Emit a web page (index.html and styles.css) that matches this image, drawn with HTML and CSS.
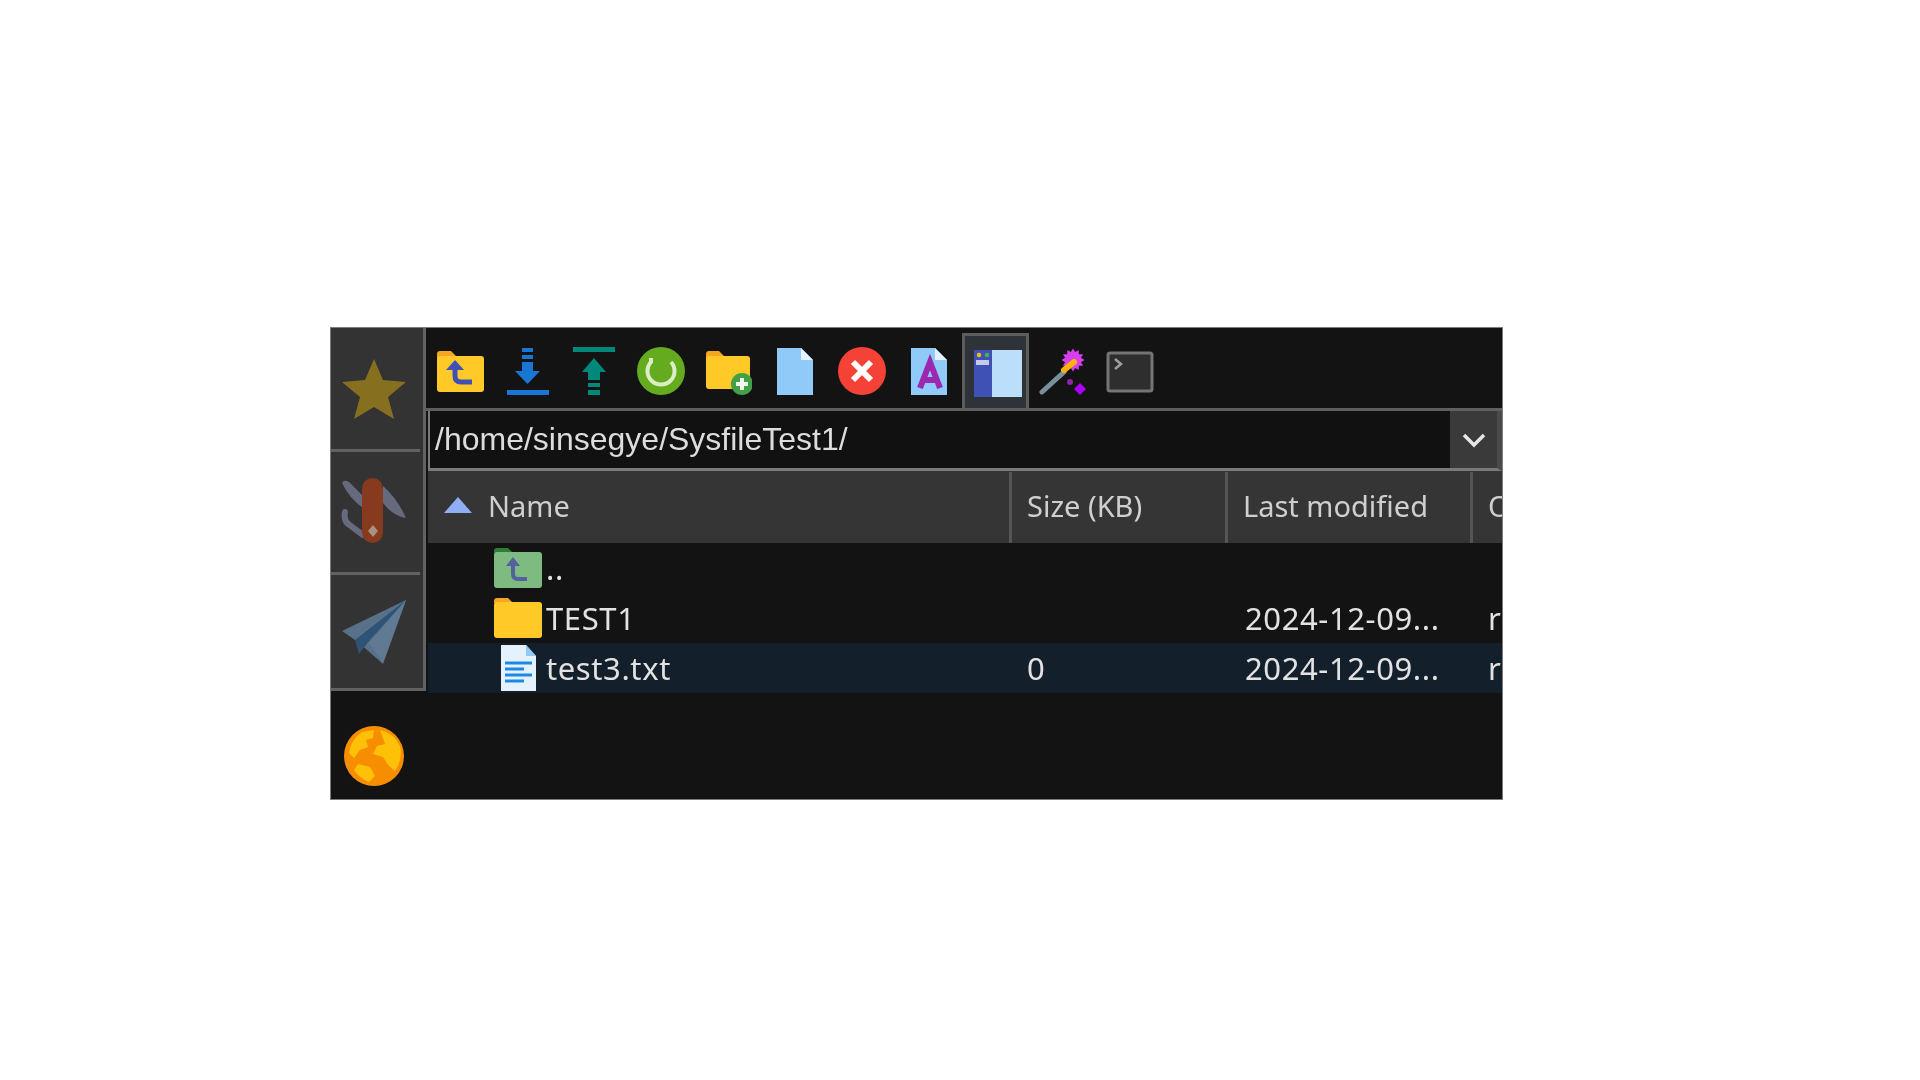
FILE: index.html
```
<!DOCTYPE html>
<html lang="en">
<head>
<meta charset="utf-8">
<title>File browser</title>
<link rel="stylesheet" href="styles.css">
</head>
<body>
<div class="window">
  <aside class="rail">
    <div class="rail-tabs">
      <div class="rail-tab tab-a">
        <svg width="66" height="62" viewBox="0 0 66 62"><polygon fill="#86701f" points="33,1 42,22 65,24 47,39 53,61 33,49 13,61 19,39 1,24 24,22"/></svg>
      </div>
      <div class="rail-tab tab-b">
        <svg width="66" height="68" viewBox="0 0 66 68">
          <path fill="#666a7e" d="M1 5 Q3 1 8 4 L22 18 L22 30 Q8 20 1 5 Z"/>
          <path fill="#666a7e" d="M42 8 Q56 20 65 40 Q52 38 42 25 Z"/>
          <path fill="none" stroke="#666a7e" stroke-width="6" stroke-linecap="round" d="M4 34 Q2 44 10 48 L22 57"/>
          <rect x="21" y="0" width="21" height="65" rx="10.5" fill="#873a1d"/>
          <polygon fill="#a98f84" points="32,47 37,53 32,59 27,53"/>
        </svg>
      </div>
      <div class="rail-tab tab-c">
        <svg width="66" height="66" viewBox="0 0 66 66">
          <polygon fill="#587189" points="65,1 1,32 17,43 42,65"/>
          <polygon fill="#2f5376" points="65,1 14,41 18,55 28,42"/>
          <polygon fill="#5f7a92" points="65,1 28,44 42,64"/>
        </svg>
      </div>
    </div>
    <div class="rail-foot">
      <svg width="60" height="60" viewBox="0 0 60 60">
        <circle cx="30" cy="30" r="30" fill="#f78d00"/>
        <path fill="#ffc107" d="M18 6 L30 4 L29 12 L22 14 L24 21 L16 24 L10 32 L5 27 Q7 13 18 6 Z"/>
        <path fill="#ffc107" d="M36 4 Q50 7 56 20 Q59 33 51 45 L44 39 L39 31 L29 28 L33 20 L41 18 Z"/>
        <path fill="#ffc107" d="M14 38 L26 41 L31 50 L25 56 Q15 52 10 44 Z"/>
      </svg>
    </div>
  </aside>
  <main class="main">
    <div class="toolbar">
      <button class="tool">
        <svg width="48" height="48" viewBox="0 0 48 48"><path fill="#f5a623" d="M1 7 Q1 4 4 4 H15 L20 9 V20 H1 Z"/><rect x="1" y="9" width="47" height="36" rx="3" fill="#ffca28"/><path fill="none" stroke="#3f51b5" stroke-width="5" d="M19 20 V29 Q19 35 25 35 H36"/><polygon fill="#3f51b5" points="19,13 28,23 10,23"/></svg>
      </button>
      <button class="tool">
        <svg width="48" height="48" viewBox="0 0 48 48"><g fill="#1976d2"><rect x="19" y="1" width="11" height="4"/><rect x="19" y="8" width="11" height="4"/><rect x="19" y="15" width="11" height="9"/><polygon points="12,24 37,24 24.5,37"/><rect x="4" y="43" width="42" height="5"/></g></svg>
      </button>
      <button class="tool">
        <svg width="48" height="48" viewBox="0 0 48 48"><g fill="#00897b"><rect x="3" y="0" width="42" height="5"/><polygon points="24,11 36,25 12,25"/><rect x="18" y="25" width="12" height="8"/><rect x="18" y="36" width="12" height="4"/><rect x="18" y="43" width="12" height="5"/></g></svg>
      </button>
      <button class="tool">
        <svg width="48" height="48" viewBox="0 0 48 48"><circle cx="24" cy="24" r="24" fill="#64ac1e"/><path fill="none" stroke="#dcedc8" stroke-width="4" d="M34 15 A13.5 13.5 0 1 1 14 15 V11"/></svg>
      </button>
      <button class="tool">
        <svg width="48" height="48" viewBox="0 0 48 48"><path fill="#f5a623" d="M2 7 Q2 4 5 4 H15 L20 9 V20 H2 Z"/><rect x="2" y="9" width="44" height="33" rx="3" fill="#ffca28"/><circle cx="38" cy="37" r="11" fill="#43a047"/><path fill="none" stroke="#f1f8e9" stroke-width="4" d="M38 31 V43 M32 37 H44"/></svg>
      </button>
      <button class="tool">
        <svg width="48" height="48" viewBox="0 0 48 48"><polygon fill="#90caf9" points="6,1 30,1 42,13 42,48 6,48"/><polygon fill="#e3f2fd" points="30,1 42,13 30,13"/></svg>
      </button>
      <button class="tool">
        <svg width="48" height="48" viewBox="0 0 48 48"><circle cx="24" cy="24" r="24" fill="#f44336"/><path fill="none" stroke="#fff" stroke-width="6" d="M15 15 L33 33 M33 15 L15 33"/></svg>
      </button>
      <button class="tool">
        <svg width="48" height="48" viewBox="0 0 48 48"><polygon fill="#90caf9" points="6,1 30,1 42,13 42,48 6,48"/><polygon fill="#e3f2fd" points="30,1 42,13 30,13"/><path fill="none" stroke="#9c27b0" stroke-width="6" d="M15 41 L25 15 L35 41 M18 33 H32"/></svg>
      </button>
      <button class="tool is-active">
        <svg width="48" height="48" viewBox="0 0 48 48"><rect x="0" y="1" width="18" height="47" fill="#3f51b5"/><rect x="18" y="1" width="30" height="47" fill="#bbdefb"/><circle cx="5" cy="6" r="2.2" fill="#ffc107"/><circle cx="13" cy="6" r="2.2" fill="#4caf50"/><rect x="2" y="11" width="13" height="5" fill="#c5cae9"/></svg>
      </button>
      <button class="tool">
        <svg width="48" height="48" viewBox="0 0 48 48"><g transform="translate(34 13) scale(.72) translate(-34 -17)"><polygon fill="#d83df0" points="34,1 37,6 42,3 42,9 48,9 45,14 50,17 45,20 48,25 42,25 42,31 37,28 34,33 31,28 26,31 26,25 20,25 23,20 18,17 23,14 20,9 26,9 26,3 31,6"/></g><path stroke="#78909c" stroke-width="5" stroke-linecap="round" fill="none" d="M3 45 L25 25"/><path stroke="#ffb300" stroke-width="6" stroke-linecap="round" fill="none" d="M25 23 L35 15"/><polygon fill="#aa00ff" points="41,36 47,42 41,48 35,42"/><circle cx="31" cy="35" r="3" fill="#8e24aa"/></svg>
      </button>
      <button class="tool">
        <svg width="48" height="48" viewBox="0 0 48 48"><rect x="2" y="6" width="44" height="38" rx="2" fill="#2e2e2e" stroke="#757575" stroke-width="3"/><path fill="none" stroke="#9e9e9e" stroke-width="2.5" d="M9 12 L15 17 L9 22"/></svg>
      </button>
    </div>
    <div class="address">
      <span class="path">/home/sinsegye/SysfileTest1/</span>
      <span class="drop">
        <svg width="24" height="16" viewBox="0 0 24 16"><path fill="none" stroke="#e6e6e6" stroke-width="3.5" d="M2 3 L12 13 L22 3"/></svg>
      </span>
    </div>
    <div class="table">
      <div class="head">
        <div class="col col-name">
          <svg class="sort" width="30" height="16" viewBox="0 0 30 16"><polygon fill="#90aef5" points="15,0 29,16 1,16"/></svg>
          <span>Name</span>
        </div>
        <div class="col col-size"><span>Size (KB)</span></div>
        <div class="col col-date"><span>Last modified</span></div>
        <div class="col col-owner"><span>Owner</span></div>
      </div>
      <div class="row">
        <div class="cell col-name">
          <svg class="file-ico" width="48" height="42" viewBox="0 0 48 42"><path fill="#2e7d32" d="M0 4 Q0 1 3 1 H14 L19 6 H0 Z"/><rect x="0" y="5" width="48" height="36" rx="3" fill="#7dbb80"/><path fill="none" stroke="#56609c" stroke-width="4" d="M19 17 V27 Q19 32 24 32 H33"/><polygon fill="#56609c" points="19,10 26,19 12,19"/></svg>
          <span>..</span>
        </div>
        <div class="cell col-size"></div><div class="cell col-date"></div><div class="cell col-owner"></div>
      </div>
      <div class="row">
        <div class="cell col-name">
          <svg class="file-ico" width="48" height="42" viewBox="0 0 48 42"><path fill="#f5a623" d="M0 4 Q0 1 3 1 H14 L19 6 H0 Z"/><rect x="0" y="5" width="48" height="36" rx="3" fill="#ffca28"/></svg>
          <span>TEST1</span>
        </div>
        <div class="cell col-size"></div>
        <div class="cell col-date"><span>2024-12-09...</span></div>
        <div class="cell col-owner"><span>root</span></div>
      </div>
      <div class="row is-current">
        <div class="cell col-name">
          <svg class="file-ico" width="48" height="46" viewBox="0 0 48 46"><polygon fill="#e3f2fd" points="7,0 32,0 42,11 42,46 7,46"/><polygon fill="#90caf9" points="32,0 42,11 32,11"/><path stroke="#1e88e5" stroke-width="3" d="M11 18 H38 M11 24 H30 M11 30 H38 M11 36 H30"/></svg>
          <span>test3.txt</span>
        </div>
        <div class="cell col-size"><span>0</span></div>
        <div class="cell col-date"><span>2024-12-09...</span></div>
        <div class="cell col-owner"><span>root</span></div>
      </div>
    </div>
  </main>
</div>
</body>
</html>
```
FILE: styles.css
```
* { box-sizing: border-box; }
html, body { margin: 0; padding: 0; background: #fff; }
body { padding: 327px 0 0 330px; font-family: "Noto Sans", "Open Sans", sans-serif; }

.window {
  display: flex;
  width: 1173px;
  height: 473px;
  background: #131313;
  border: 1px solid #7c7c7c;
  overflow: hidden;
  filter: blur(0.6px);
}

.rail { flex: none; width: 95px; display: flex; flex-direction: column; }
.rail-tabs {
  width: 95px;
  height: 363px;
  background: #333;
  border-right: 3px solid #626262;
  border-bottom: 3px solid #626262;
  display: flex;
  flex-direction: column;
}
.rail-tab { display: flex; align-items: center; justify-content: center; padding-right: 4px; }
.tab-a { height: 124px; border-bottom: 3px solid #626262; margin-right: 3px; }
.tab-b { height: 123px; border-bottom: 3px solid #626262; margin-right: 3px; }
.tab-c { flex: 1; margin-right: 3px; }
.rail-foot { flex: 1; display: flex; align-items: center; justify-content: center; padding: 22px 9px 0 0; }

.main { flex: 1; min-width: 0; display: flex; flex-direction: column; }

.toolbar { flex: none; height: 83px; display: flex; align-items: stretch; border-bottom: 3px solid #5f5f5f; }
.tool {
  flex: none;
  width: 67px;
  padding: 6px 0 0;
  border: 0;
  background: none;
  display: flex;
  align-items: center;
  justify-content: center;
}
.is-active {
  margin-top: 5px;
  padding: 2px 0 0 5px;
  background: #2d3339;
  border: 3px solid #5c5c5c;
  border-bottom: 0;
}

.address {
  flex: none;
  height: 60px;
  margin-left: 2px;
  display: flex;
  align-items: stretch;
  background: #111;
  border-left: 2px solid #7a7a7a;
  border-bottom: 3px solid #7a7a7a;
  border-right: 5px solid #4a4a4a;
}
.path {
  flex: 1;
  padding-left: 5px;
  display: flex;
  align-items: center;
  font: 32px "Liberation Sans", Arial, sans-serif;
  color: #dcdcdc;
}
.drop { flex: none; width: 47px; background: #3a3a3a; display: flex; align-items: center; justify-content: center; }

.table { flex: 1; margin-left: 2px; font-size: 31px; letter-spacing: 0.6px; color: #e2e2e2; overflow: hidden; }
.head {
  display: grid;
  grid-template-columns: 584px 216px 245px 120px;
  height: 72px;
  background: #353535;
  color: #cfcfcf;
  font-size: 29px;
  letter-spacing: 0;
}
.row {
  display: grid;
  grid-template-columns: 584px 216px 245px 120px;
  height: 50px;
}
.is-current { background: #13202c; }
.col, .cell { display: flex; align-items: center; white-space: nowrap; overflow: hidden; }
.col { border-right: 3px solid #555; margin: 1px 0 0; padding-bottom: 5px; }
.col-name { padding-left: 15px; }
.col-size, .col-date, .col-owner { padding-left: 15px; }
.cell.col-date { padding-left: 17px; }
.head .col-name span { margin-left: 15px; }
.cell.col-name { padding-left: 66px; }
.file-ico { flex: none; margin-right: 4px; }
```
